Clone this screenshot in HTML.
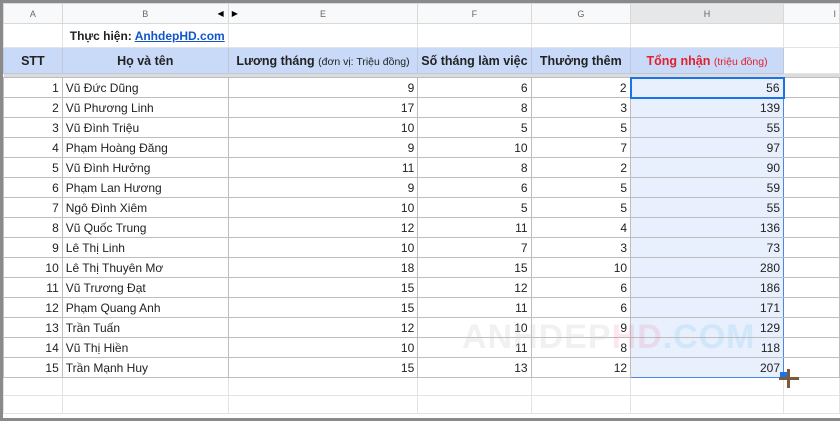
<!DOCTYPE html><html><head><meta charset="utf-8"><style>
*{margin:0;padding:0;box-sizing:border-box}
body{width:840px;height:421px;overflow:hidden;background:#fff;font-family:"Liberation Sans",Arial,sans-serif;position:relative}
.frame{position:absolute;left:0;top:0;width:840px;height:421px;border:3px solid #8a8a8a;border-right:none;z-index:9;pointer-events:none}
table{position:absolute;left:3px;top:3px;border-collapse:collapse;table-layout:fixed}
td{border:1px solid #e2e3e3;font-size:12px;color:#222;padding:0 3px;white-space:nowrap;overflow:hidden}
tr.ch td{height:20px;background:#f8f9fa;color:#666;font-size:9px;text-align:center;border-color:#d8d8d8}
tr.ch td.sel{background:#e6e7e9}
tr.r1 td{height:24px}
tr.hd td{height:26px;background:#c9daf8;font-weight:bold;text-align:center;font-size:12.5px;border-color:#c0c8d8}
tr.fz td{height:4px;background:#dadce0;border:none;padding:0}
tr.d td{height:20px;border-color:#bdbdbd}
tr.d td.n{text-align:right}
tr.d td.h{background:#e8f0fe;text-align:right;border-left:1px solid #4a86e8;border-right:1px solid #4a86e8}
tr.e td{height:18px}
small{font-weight:normal;font-size:10.5px}
</style></head><body>
<table>
<colgroup><col style="width:60px"><col style="width:165px"><col style="width:190px"><col style="width:113px"><col style="width:100px"><col style="width:154px"><col style="width:58px"></colgroup>
<tr class="ch"><td>A</td><td style="position:relative">B<span style="position:absolute;right:4px;font-size:8px;color:#000">◀</span></td><td style="position:relative"><span style="position:absolute;left:3px;font-size:8px;color:#000">▶</span>E</td><td>F</td><td>G</td><td class="sel">H</td><td style="text-align:right">I</td></tr>
<tr class="r1"><td></td><td style="font-weight:bold;padding-left:7px">Thực hiện: <span style="color:#1155cc;text-decoration:underline">AnhdepHD.com</span></td><td></td><td></td><td></td><td></td><td></td></tr>
<tr class="hd"><td>STT</td><td>Họ và tên</td><td>Lương tháng <small>(đơn vị: Triệu đồng)</small></td><td>Số tháng làm việc</td><td>Thưởng thêm</td><td style="color:#e0202f">Tổng nhận <small>(triệu đồng)</small></td><td style="background:#fff;border-color:#e2e3e3"></td></tr>
<tr class="fz"><td></td><td></td><td></td><td></td><td></td><td></td><td></td></tr>
<tr class="d"><td class="n">1</td><td>Vũ Đức Dũng</td><td class="n">9</td><td class="n">6</td><td class="n">2</td><td class="h" style="border:2px solid #1a73e8">56</td><td></td></tr>
<tr class="d"><td class="n">2</td><td>Vũ Phương Linh</td><td class="n">17</td><td class="n">8</td><td class="n">3</td><td class="h">139</td><td></td></tr>
<tr class="d"><td class="n">3</td><td>Vũ Đình Triệu</td><td class="n">10</td><td class="n">5</td><td class="n">5</td><td class="h">55</td><td></td></tr>
<tr class="d"><td class="n">4</td><td>Phạm Hoàng Đăng</td><td class="n">9</td><td class="n">10</td><td class="n">7</td><td class="h">97</td><td></td></tr>
<tr class="d"><td class="n">5</td><td>Vũ Đình Hưởng</td><td class="n">11</td><td class="n">8</td><td class="n">2</td><td class="h">90</td><td></td></tr>
<tr class="d"><td class="n">6</td><td>Phạm Lan Hương</td><td class="n">9</td><td class="n">6</td><td class="n">5</td><td class="h">59</td><td></td></tr>
<tr class="d"><td class="n">7</td><td>Ngô Đình Xiêm</td><td class="n">10</td><td class="n">5</td><td class="n">5</td><td class="h">55</td><td></td></tr>
<tr class="d"><td class="n">8</td><td>Vũ Quốc Trung</td><td class="n">12</td><td class="n">11</td><td class="n">4</td><td class="h">136</td><td></td></tr>
<tr class="d"><td class="n">9</td><td>Lê Thị Linh</td><td class="n">10</td><td class="n">7</td><td class="n">3</td><td class="h">73</td><td></td></tr>
<tr class="d"><td class="n">10</td><td>Lê Thị Thuyên Mơ</td><td class="n">18</td><td class="n">15</td><td class="n">10</td><td class="h">280</td><td></td></tr>
<tr class="d"><td class="n">11</td><td>Vũ Trương Đạt</td><td class="n">15</td><td class="n">12</td><td class="n">6</td><td class="h">186</td><td></td></tr>
<tr class="d"><td class="n">12</td><td>Phạm Quang Anh</td><td class="n">15</td><td class="n">11</td><td class="n">6</td><td class="h">171</td><td></td></tr>
<tr class="d"><td class="n">13</td><td>Trần Tuấn</td><td class="n">12</td><td class="n">10</td><td class="n">9</td><td class="h">129</td><td></td></tr>
<tr class="d"><td class="n">14</td><td>Vũ Thị Hiền</td><td class="n">10</td><td class="n">11</td><td class="n">8</td><td class="h">118</td><td></td></tr>
<tr class="d"><td class="n">15</td><td>Trần Mạnh Huy</td><td class="n">15</td><td class="n">13</td><td class="n">12</td><td class="h" style="border-bottom:1px solid #4a86e8">207</td><td></td></tr>
<tr class="e"><td></td><td></td><td></td><td></td><td></td><td></td><td></td></tr>
<tr class="e"><td></td><td></td><td></td><td></td><td></td><td></td><td></td></tr>
</table>
<div style="position:absolute;left:462px;top:318px;font:bold 34px 'Liberation Sans',sans-serif;color:rgba(200,200,200,0.25);letter-spacing:1px">ANHDEP<span style="color:rgba(240,120,150,0.18)">HD</span><span style="color:rgba(120,190,230,0.2)">.COM</span></div>
<div style="position:absolute;left:780px;top:372px;width:7px;height:7px;background:#1a73e8"></div>
<div style="position:absolute;left:779px;top:377px;width:20px;height:3px;background:#7a5a3a"></div>
<div style="position:absolute;left:787px;top:369px;width:3px;height:19px;background:#7a5a3a"></div>
<div class="frame"></div>
</body></html>
